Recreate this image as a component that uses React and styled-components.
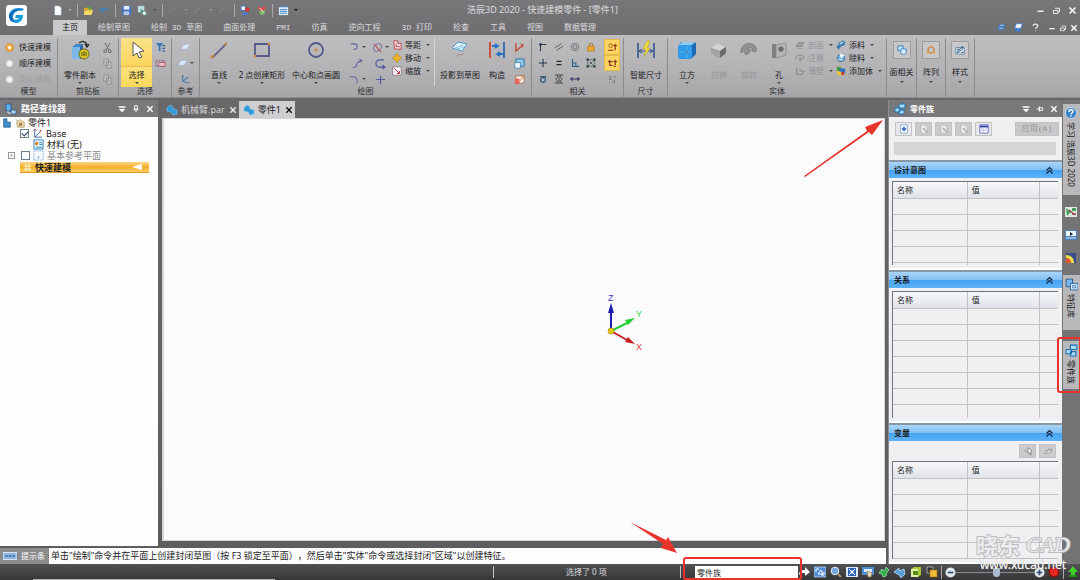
import React from 'react';
import styled, { createGlobalStyle, css } from 'styled-components';

const GlobalStyle = createGlobalStyle`
  * {
    box-sizing: border-box;
  }

  body {
    margin: 0;
    font-family: 'Noto Sans', 'Noto Sans CJK SC', sans-serif;
    font-size: 8px;
    line-height: 10px;
    color: #1c1c1e;
    background: #6b6b6d;
  }

  button, input, select {
    font: inherit;
    color: inherit;
    margin: 0;
    padding: 0;
    border: 0;
    background: none;
  }

  svg {
    display: block;
    flex: none;
  }
`;

/* ---------- icons ---------- */

const big = {
  copyPart: <>
    <path d="M2 7l4-3h7v12l-3 3H2z" fill="#3f86c8" /><path d="M2 7h8v12H2z" fill="#7db7e6" /><path d="M10 7l3-3v12l-3 3z" fill="#2a66a4" />
    <path d="M9 3c4-3 8-1 8 3m-2-2l2 3 2-3" fill="none" stroke="#333" strokeWidth="1.4" />
    <circle cx="14" cy="14" r="5" fill="#d5c72c" stroke="#766b12" /><path d="M12 16v-4m2 4v-5m2 5v-4" stroke="#5c5412" />
  </>,
  cursor: <path d="M6 2v14l4-3 2 5 3-1-3-5 5-1z" fill="#fff" stroke="#555" strokeWidth="1" />,
  line: <><path d="M4 17L17 4" stroke="#64648c" strokeWidth="1.8" /><path d="M2 18l3-3" stroke="#c8813a" strokeWidth="2" /><path d="M15 5l3-2" stroke="#c8813a" strokeWidth="2" /></>,
  rect: <><path d="M3 4h14v12H3z" fill="none" stroke="#56598c" strokeWidth="1.8" /><circle cx="3" cy="16" r="1.3" fill="#d08a3c" /><circle cx="17" cy="4" r="1.3" fill="#d08a3c" /></>,
  circle: <><circle cx="10" cy="10" r="7" fill="none" stroke="#56598c" strokeWidth="1.8" /><circle cx="10" cy="10" r="1.5" fill="#d08a3c" /></>,
  project: <><path d="M2 8l6-6 9 2-5 7z" fill="#e2f2fb" stroke="#4b9ac9" /><path d="M5 8l8-3M7 9l7-2" stroke="#7cc0e4" /><path d="M6 17c2-5 5 0 8-4" stroke="#b58a8a" fill="none" /></>,
  construct: <><path d="M3 2v16" stroke="#cc4a32" strokeWidth="1.8" /><path d="M17 2v16" stroke="#3369a8" strokeWidth="1.8" /><path d="M5 6h6m-3-2l3 2-3 2M16 14h-6m3-2l-3 2 3 2" stroke="#2774c4" strokeWidth="1.8" fill="none" /></>,
  smartDim: <><path d="M2 3v15M18 3v15" stroke="#31548a" strokeWidth="1.6" /><path d="M3 11h14M6 9l-3 2 3 2m8-4l3 2-3 2" stroke="#31548a" fill="none" /><path d="M11 1L7 9h3l-2 8 6-9h-3l3-7z" fill="#f4e23c" stroke="#b6a32a" strokeWidth=".6" /></>,
  box: <><path d="M4 2h13q2 0 2 2v10l-4 4H2V5z" fill="#1f68b4" /><rect x="1" y="5" width="14" height="14" rx="2" fill="#2f9ae8" /><path d="M2 5l3-3h13l-3 3z" fill="#8ccaf2" /><circle cx="10" cy="12" r="1.3" fill="#0e3c74" /><path d="M10 6v12M2 12h12" stroke="#6fbcf2" strokeWidth=".7" /></>,
  extrude: <><path d="M2 8l6-5 9 4v6l-7 5-8-5z" fill="#8c8c8e" /><path d="M2 8l6-5 9 4-6 4z" fill="#d4d4d6" /><path d="M2 8l9 4v6l-9-5z" fill="#a5a5a7" /><path d="M11 11l6-4v6l-6 5z" fill="#6b6b6d" /></>,
  revolve: <path d="M2 13C1 5 8 2 13 4c4 1 5 4 4 8l-4-1V8c-2-1-4-1-5 1h3v3L7 15l-2-4z" fill="#929294" stroke="#747476" strokeWidth=".7" />,
  hole: <><path d="M3 4h4v14H3z" fill="#7e7e80" /><path d="M7 5l10-2v12l-10 3z" fill="#b5b5b7" stroke="#858587" strokeWidth=".7" /><circle cx="12" cy="9" r="2.6" fill="#6c6c6e" /></>,
  faceRel: <><path d="M3 3h9v8H3z" fill="#bcdcf4" stroke="#3f83bd" strokeWidth="1.5" /><rect x="8" y="8" width="9" height="9" rx="2" fill="#d8ecfa" stroke="#3f83bd" strokeWidth="1.5" /></>,
  pattern: <><circle cx="10" cy="10" r="5" fill="none" stroke="#c8813a" strokeWidth="2" /><circle cx="10" cy="4" r="2" fill="#e0a050" /><circle cx="5" cy="14" r="2" fill="#e0a050" /><circle cx="15" cy="14" r="2" fill="#e0a050" /></>,
  style: <><path d="M3 6h14v11H3z" fill="#d8e5ee" stroke="#2f5f85" /><path d="M5 14l7-8 3-2-1 4-6 6zM5 9h4m3 5h4" stroke="#234b6b" strokeWidth="1.3" fill="none" /></>,
};

const small = {
  page: <path d="M3 1h5l2 2v8H3z" fill="#fff" stroke="#a9bfd4" strokeWidth=".6" />,
  open: <><path d="M1 3h4l1 1h4v6H1z" fill="#d6a42c" /><path d="M2 6h9l-2 5H1z" fill="#f4db6a" /><path d="M5 2l5 1-2 3z" fill="#57a843" /></>,
  undo: <path d="M3 6c1-4 6-3 6 1M1 4l2 3 3-2" fill="none" stroke="#3f83bd" strokeWidth="1.5" />,
  save: <><path d="M1 1h10v10H1z" fill="#4a72c4" /><path d="M3 1h6v4H3z" fill="#e6eefb" /><path d="M3 7h6v4H3z" fill="#b9c9e6" /></>,
  saveAll: <><path d="M1 1h7v7H1z" fill="#bcdde0" /><path d="M4 4l7 5-2 3-5-4z" fill="#4d9a70" /><circle cx="8" cy="9" r="2" fill="#e8f2f5" /></>,
  faded: <path d="M2 9c1-4 4-6 7-6" fill="none" stroke="#858587" />,
  part: <><path d="M1 1h5v5H1z" fill="#eef3fb" stroke="#3c66b8" /><path d="M5 6l2-4 4 2-2 4z" fill="#d2383a" /><path d="M3 8h5v3H3z" fill="#4a7ed0" /></>,
  part2: <><path d="M2 1l4 2 4-2v4l-4 2-3-2z" fill="#e04848" /><path d="M3 6l3 1 4-2-1 5-4 1z" fill="#78c063" /><path d="M4 3l4 5" stroke="#fff" /></>,
  list: <><path d="M1 2h10v9H1z" fill="#dff0fc" /><path d="M1 2h10M2 5h8M2 7h8M2 9h8" stroke="#3f83bd" /></>,
  cut: <path d="M3 1l5 8M9 1L4 9M2 10a1.5 1.5 0 103 0 1.5 1.5 0 10-3 0m5 0a1.5 1.5 0 103 0 1.5 1.5 0 10-3 0" fill="none" stroke="#77777a" strokeWidth="1.2" />,
  copy: <path d="M2 1h5v7H2zM5 4h5v7H5z" fill="#bcbcbe" stroke="#89898b" strokeWidth=".8" />,
  filter: <><path d="M1 1h8L6 5v5H4V5z" fill="#3878bd" /><path d="M8 4h3M8 7h3M8 10h3" stroke="#2f5f95" strokeWidth="1.3" /></>,
  selBox: <><path d="M1 3h9v6H1z" fill="none" stroke="#7d4a78" strokeDasharray="2 1" /><path d="M4 5h7v4H4z" fill="#e9c7cc" stroke="#b03c50" strokeWidth=".8" /></>,
  plane: <path d="M1 8l3-5 7-1-3 6z" fill="#dae7f5" stroke="#a1b6d0" strokeWidth=".7" />,
  axes: <path d="M3 1v7l7 2M3 8l6-5M2 4l2-2" fill="none" stroke="#4a7da8" strokeWidth="1.1" />,
  arc: <path d="M2 2h4a3 3 0 010 6H5" fill="none" stroke="#65689c" strokeWidth="1.2" />,
  trim: <><ellipse cx="6" cy="6" rx="5" ry="3.500" transform="rotate(-40 6 6)" fill="none" stroke="#7a6a98" /><path d="M2 2l8 9" stroke="#b5525e" strokeWidth="1.2" /></>,
  curve: <path d="M1 10c6 2 2-7 9-7M8 1l3 2-3 2" fill="none" stroke="#65689c" strokeWidth="1.2" />,
  slot: <path d="M10 2H5a4 4 0 000 8h6M8 8l3 2-3 2" fill="none" stroke="#5157a2" strokeWidth="1.3" />,
  fillet: <path d="M1 3h4c3 0 4 2 4 7" fill="none" stroke="#65689c" strokeWidth="1.2" />,
  cross: <path d="M6 2v9M1 6h10" fill="none" stroke="#5157a2" strokeWidth="1.2" />,
  offset: <><path d="M2 1h5v3h4v7H3z" fill="#f2dada" stroke="#b53544" /><path d="M5 4v4h5" fill="none" stroke="#b53544" /></>,
  move: <path d="M6 0l2 3v1h1l3 2-3 2H8v1l-2 3-2-3V8H3L0 6l3-2h1V3z" fill="#edb52c" stroke="#a66d12" strokeWidth=".5" />,
  scale: <><path d="M1 1h10v10H1z" fill="#fff" stroke="#8b6d80" /><path d="M3 3l6 6M6 9h3V6" stroke="#c43545" fill="none" strokeWidth="1.2" /></>,
  angle: <><path d="M2 1v9l8-7" fill="none" stroke="#c2442d" strokeWidth="1.4" /><path d="M7 2l3 1-1 3" fill="none" stroke="#c2442d" /></>,
  sheet: <><path d="M2 1h9v8H2z" fill="#8fc8ea" stroke="#2c6da0" /><path d="M1 5h6v6H1z" fill="#f4f8fb" stroke="#2c6da0" strokeWidth=".7" /></>,
  sheet2: <><path d="M2 2h9v8H2z" fill="#f8efe6" stroke="#a56a4a" /><path d="M1 5h5v6H1z" fill="#e5645a" /><path d="M8 1l2 2-4 5" stroke="#cf7d20" fill="none" /></>,
  connect: <path d="M3 11V3h7M2 2h2v2H2z" fill="none" stroke="#26364f" strokeWidth="1.2" />,
  parallel: <path d="M1 7l8-5M3 10l8-5" stroke="#5a5a60" strokeWidth="1.1" />,
  ring: <><circle cx="6" cy="6" r="4.5" fill="none" stroke="#6e6e78" /><circle cx="6" cy="6" r="2.3" fill="none" stroke="#6e6e78" /></>,
  lock: <><path d="M2 5h8v6H2z" fill="#eba62f" stroke="#a56c14" strokeWidth=".6" /><path d="M4 5V2h4v3" fill="none" stroke="#b5781c" /></>,
  plus: <path d="M6 1v10M1 6h10" stroke="#26364f" strokeWidth="1.3" />,
  equal: <path d="M3 4h6M3 8h6" stroke="#26262a" strokeWidth="1.6" />,
  perp: <path d="M3 1v9h8M3 6h4v4" fill="none" stroke="#2b6594" strokeWidth="1.3" />,
  rigid: <><path d="M2 2h8v8H2z" fill="none" stroke="#2f5a35" strokeDasharray="2 1" /><path d="M1 1h2v2H1zM9 1h2v2H9zM1 9h2v2H1zM9 9h2v2H9zM4 4l4 4m0-4L4 8" fill="#4a6a4a" stroke="#24324a" strokeWidth=".8" /></>,
  tangent: <><circle cx="6" cy="7" r="3" fill="none" stroke="#26506e" strokeWidth="1.3" /><path d="M2 3h8" stroke="#26506e" /></>,
  symmetric: <path d="M1 1h3v3L2 6l2 2v3H1M11 1H8v3l2 2-2 2v3h3M6 0v12" fill="none" stroke="#36363a" strokeWidth="1" />,
  horiz: <path d="M1 6h10M3 4L1 6l2 2m6-4l2 2-2 2" fill="none" stroke="#31315f" strokeWidth="1.3" />,
  relA: <><circle cx="4" cy="4" r="2" fill="none" stroke="#a5581c" /><path d="M1 9h6m2-7v7M7 4h4" stroke="#9c3424" strokeWidth="1.3" /></>,
  relB: <path d="M3 2v6h3M1 4h5m3-2v6M7 4h4M7 9h3" fill="none" stroke="#8c3424" strokeWidth="1.3" />,
  relC: <path d="M2 3h2v3H2m5-3h3M2 9h1m2 0h1m2-3v4" fill="none" stroke="#77777a" strokeWidth="1.2" />,
  grayA: <path d="M1 8l3-5h7L8 8zM3 10h6" fill="#9a9a9c" stroke="#858587" strokeWidth=".8" />,
  grayB: <path d="M1 8c0-7 7-7 10-3L8 8 6 5v6" fill="none" stroke="#858587" strokeWidth="1.2" />,
  grayC: <path d="M2 2v8h6l3-4H6V3" fill="none" stroke="#858587" strokeWidth="1.2" />,
  addMat: <><path d="M3 4l5-3 3 2-2 4-2-1-4 5-2-3 3-2z" fill="#3a86c4" stroke="#1d4c7c" strokeWidth=".6" /><path d="M4 4l4-2 1 1-4 2z" fill="#d4ecfa" /></>,
  cutMat: <><circle cx="6" cy="6" r="4.5" fill="#6caede" stroke="#245d90" strokeWidth=".7" /><path d="M6 6L5 1l5 2zM3 8h5" fill="#fff" stroke="#e6f2fa" /></>,
  addBody: <><path d="M1 1h5v5H1z" fill="#4a9e3c" /><path d="M4 3h7v6H4z" fill="#2d6fc0" /><path d="M1 6l5 1v4H2z" fill="#f0c630" /><circle cx="8" cy="9" r="2" fill="#d6412c" /></>,
  family: <path d="M5 1h6v4H5zM1 5h5v4H1zM5 7h5v4H5z" fill="#a9dcf8" stroke="#1f6eb2" strokeWidth="1" />,
  finder: <><path d="M1 1h5v7H1z" fill="#5fb1e8" stroke="#1b4f88" strokeWidth=".7" /><path d="M6 7h5v4H6z" fill="#a6d4f4" stroke="#1b4f88" strokeWidth=".7" /><path d="M3 8v2h3" stroke="#dce9f4" fill="none" /></>,
  docPart: <path d="M1 4l3-3 3 2v2l4 1v4l-4 1-2-3-4-1z" fill="#2f9ad8" stroke="#79c7ef" strokeWidth=".6" />,
  cube: <path d="M2 1h4v4h4v6H2z" fill="#3d8fd0" stroke="#1a4e82" strokeWidth=".8" />,
  house: <><path d="M2 5l4-3 5 3v6H3z" fill="#f6e4b8" stroke="#a67d3a" strokeWidth=".8" /><path d="M1 2l3 2M5 6h3v3H5z" stroke="#555" fill="#d18c2e" strokeWidth=".6" /></>,
  base: <><path d="M3 1v9h8M3 10l6-6" fill="none" stroke="#39669c" /><path d="M1 3l2-2 2 2m3 0l2-1-1 3" fill="none" stroke="#b83c46" strokeWidth=".8" /></>,
  material: <><path d="M1 1h10v10H1z" fill="#eaf5fb" stroke="#2e80b4" /><circle cx="4" cy="5" r="2" fill="#d8862e" /><path d="M7 4h3M7 6h3M3 9h7" stroke="#2e80b4" /></>,
  refPlane: <><path d="M1 1h10v10H1z" fill="#fafcff" stroke="#7fa9d4" strokeDasharray="2 1" /><path d="M5 7h2v2H5z" fill="#7fa9d4" /></>,
  hash: <path d="M4 1v10M8 1v10M1 4h10M1 8h10" stroke="#fff6d2" strokeWidth="1.3" />,
  tbNew: <><path d="M2 1h8v10H2z" fill="#fff" stroke="#5a7fb8" strokeWidth=".7" /><path d="M6 3l3 3-3 3-3-3z" fill="#3a70c8" /></>,
  tbGray: <><path d="M2 1h5l3 3v7H2z" fill="#e8e8ea" stroke="#aeaeb0" strokeWidth=".8" /><path d="M5 5l5 5" stroke="#98989a" strokeWidth="1.3" /></>,
  tbTable: <><path d="M1 1h10v10H1z" fill="#fff" stroke="#5a5fa8" /><path d="M1 3h10" stroke="#3c46b0" strokeWidth="2.4" /><path d="M2 6h8M2 8h8M5 5v6" stroke="#a8acd8" strokeWidth=".7" /></>,
  pointer: <><path d="M1 6h5" stroke="#a0a0a2" /><path d="M6 2v7l2-1 1 3 1-1-1-3 2-1z" fill="#fff" stroke="#555" strokeWidth=".7" /></>,
  pointer2: <path d="M1 9h4V5h5l-1 3-3 1M2 6l3-1M7 2v3M10 2v4" stroke="#929294" fill="#dcdcde" strokeWidth=".8" />,
  help: <><circle cx="6" cy="6" r="5.5" fill="#3a82c8" stroke="#c5def5" strokeWidth=".8" /><path d="M4 5c0-3 4-3 4-.5C8 6 6 6 6 7.500m0 1v1.300" fill="none" stroke="#fff" strokeWidth="1.4" /></>,
  sensor: <><path d="M0 1h12v10H0z" fill="#dce9e0" /><path d="M1 2l5 4-4 4zM7 2h4v3H7z" fill="#4aa05a" /><path d="M4 4l6 5M7 8h4" stroke="#9c4658" strokeWidth="1.5" /></>,
  player: <><path d="M0 1h12v10H0z" fill="#4a83c0" /><path d="M1 2h10v5H1z" fill="#eef5fc" /><path d="M5 3l3 2-3 2z" fill="#222" /><path d="M1 9h10" stroke="#dce9f8" /></>,
  rainbow: <><path d="M1 1h10v10H1z" fill="#37508c" /><path d="M1 3c5 0 8 3 8 8H1z" fill="#e9dc4a" /><path d="M1 6c3 0 5 2 5 5H1z" fill="#e05230" /></>,
  features: <><path d="M1 1h6v7H1z" fill="#78b8ec" stroke="#244f86" strokeWidth=".8" /><path d="M5 5h7v6H5z" fill="#c9e4f9" stroke="#2a66a4" strokeWidth=".8" /><path d="M7 7h3v2H7z" fill="none" stroke="#2a66a4" strokeWidth=".6" /></>,
  prompt: <><path d="M0 3h12v6H0z" fill="#8db9e2" stroke="#d7e6f4" strokeWidth=".8" /><path d="M2 6h2m1 0h2m1 0h2" stroke="#2f5f95" strokeWidth="1.3" /></>,
  stack: <><path d="M3 2h8l-1 3H2zM2 6h8l-1 3H1z" fill="#3b82d8" /><path d="M4 3h5M3 7h5" stroke="#fff" strokeWidth=".7" /></>,
  stack2: <><path d="M3 1h8L9 7H1z" fill="#fff" stroke="#3b82d8" /><path d="M1 8h8v3H1z" fill="#3b82d8" /></>,
  go: <path d="M1 9c0-4 2-5 6-5V1l5 5-5 4V7C4 7 3 7 1 9z" fill="#fff" />,
  fit: <><path d="M0 1h12v10H0z" fill="#4d8ed4" stroke="#cfe2f6" strokeWidth=".7" /><path d="M2 3h3M2 3v3m8 3H7m3 0V6M4 8l3-4 2 4z" stroke="#fff" fill="none" /></>,
  zoom: <><circle cx="5" cy="5" r="3.800" fill="#6fa6dc" stroke="#e4effa" /><path d="M8 8l3 3" stroke="#ba895a" strokeWidth="2" /></>,
  zoomAll: <><path d="M0 1h12v10H0z" fill="#dbeafa" /><path d="M2 2h8v8H2z" fill="#2e62b0" /><path d="M3 3l6 6m0-6L3 9" stroke="#fff" /><circle cx="6" cy="6" r="1.500" fill="#fff" /></>,
  pan: <><path d="M0 1h12v8H0z" fill="#4d8ed4" /><path d="M2 3h8v3H2z" fill="#ddecfa" /><path d="M5 5l5 2-1 4H6z" fill="#f0dcc0" stroke="#8b6d4a" strokeWidth=".6" /></>,
  rotate: <path d="M1 7l3-4 1 2c2-1 3-2 3-4l3 3-2 2-1 4-3 1-1-3z" fill="#2faf4a" stroke="#b4efbe" strokeWidth=".7" />,
  orient: <path d="M0 6l5-4v3l5-2 1 5-4 4-2-3z" fill="#579edd" stroke="#d0e6f8" strokeWidth=".7" />,
  views: <><path d="M1 3l3-2h7v8l-3 2H1z" fill="#a7c83a" /><path d="M1 3h7v8H1z" fill="#e2f2a4" /><path d="M3 5h5v4H3z" fill="#588a1d" /></>,
  colors: <><path d="M1 1h6v6H1z" fill="#333" stroke="#ccc" strokeWidth=".7" /><path d="M4 4h7v7H4z" fill="#f0bb35" stroke="#a06c14" strokeWidth=".6" /></>,
  minus: <><circle cx="6" cy="6" r="5.500" fill="#dfe6ee" /><path d="M3 6h6" stroke="#2f4770" strokeWidth="1.8" /></>,
  plusRound: <><circle cx="6" cy="6" r="5.500" fill="#dfe6ee" /><path d="M3 6h6M6 3v6" stroke="#2f4770" strokeWidth="1.8" /></>,
  record: <><circle cx="6" cy="6" r="5.500" fill="#8c1310" /><circle cx="6" cy="6" r="4" fill="#e52820" /></>,
  upload: <><path d="M6 0l5 6H8v3H4V6H1z" fill="#45cf2c" /><path d="M2 9h8v2H2z" fill="#24921a" /></>,
  min: <path d="M2 7h8" stroke="#eee" strokeWidth="2" />,
  restore: <path d="M4 3h6v5H8M2 6h6v4H2z" fill="none" stroke="#eee" strokeWidth="1.300" />,
  close: <path d="M2 2l8 8M10 2l-8 8" stroke="currentColor" strokeWidth="2" />,
  question: <path d="M3 4c0-4 6-3 6 0 0 2-3 2-3 4m0 2v1" fill="none" stroke="#eee" strokeWidth="1.600" />,
  menu: <path d="M1 2h10v2H1zM1 6h10l-5 5z" fill="#fff" />,
  pin: <path d="M4 1h4v5H4zM2 7h8M6 7v4" fill="none" stroke="#fff" strokeWidth="1.400" />,
  pinSide: <path d="M5 4h5v4H5zM5 2v8M1 6h4" fill="none" stroke="#fff" strokeWidth="1.400" />,
  collapse: <path d="M2 6l4-4 4 4M2 10l4-4 4 4" fill="none" stroke="#16243c" strokeWidth="1.600" />,
};

const Icon = ({ name, size = 10 }) => (
  <svg width={size} height={size} viewBox={big[name] ? '0 0 20 20' : '0 0 12 12'} aria-hidden="true">
    {big[name] || small[name]}
  </svg>
);

/* ---------- shared parts ---------- */

const Page = styled.div`
  min-height: 100vh;
  display: flex;
  flex-direction: column;
`;

const Caret = styled.i`
  flex: none;
  width: 0;
  height: 0;
  border: 2px solid transparent;
  border-top-color: ${(p) => p.$color || '#4a4a4c'};
  border-bottom: 0;
`;

const Row = styled.div`
  display: flex;
  align-items: center;
  gap: ${(p) => p.$gap || 0}px;
`;

const IconButton = styled.button`
  display: flex;
  align-items: center;
  justify-content: center;
  gap: 2px;
  min-width: 10px;
  color: ${(p) => p.$color || '#fff'};
`;

/* ---------- header ---------- */

const Header = styled.header`
  position: relative;
  background: linear-gradient(#777779, #6e6e70);
  color: #dcdcde;
`;

const Logo = styled.svg`
  position: absolute;
  left: 6px;
  top: 5px;
`;

const TitleRow = styled.div`
  display: grid;
  grid-template-columns: 1fr auto 1fr;
  align-items: center;
  height: 20px;
  padding: 0 3px 0 8px;
`;

const QuickBar = styled.div`
  display: flex;
  align-items: center;
  gap: 5px;
  padding-left: 44px;
`;

const QuickSep = styled.span`
  width: 1px;
  height: 13px;
  background: #a9a9ab;
`;

const Title = styled.h1`
  margin: 0;
  font-size: 9px;
  font-weight: 400;
`;

const WindowButtons = styled.div`
  display: flex;
  justify-content: flex-end;
  gap: ${(p) => p.$gap}px;
`;

const TabRow = styled.div`
  display: flex;
  align-items: stretch;
  justify-content: space-between;
  height: 15px;
  padding: 0 1px 0 53px;
`;

const Tabs = styled.nav`
  display: flex;
  font-family: 'Liberation Mono', 'Noto Sans CJK SC', monospace;
`;

const Tab = styled.button`
  padding: 0 10px 0 11px;
  white-space: nowrap;
  ${(p) => p.$active && css`
    padding: 0 9px;
    background: #c9c9cb;
    color: #111;
  `}
`;

/* ---------- ribbon ---------- */

const Ribbon = styled.section`
  display: flex;
  height: 63px;
  padding: 3px 0 0;
  background: linear-gradient(#bebec0, #b2b2b4 60%, #a6a6a8);
  border-bottom: 1px solid #8f8f91;
  overflow: hidden;
`;

const GroupBox = styled.div`
  flex: none;
  display: flex;
  flex-direction: column;
  width: ${(p) => p.$width}px;
  border-right: 1px solid #8b8b8d;
  text-align: center;
`;

const GroupBody = styled.div`
  flex: 1;
  display: flex;
  padding: 0 2px;
  min-height: 0;
`;

const GroupLabel = styled.div`
  height: 11px;
  line-height: 9px;
  color: #303032;
`;

const Tool = styled.button`
  display: flex;
  flex-direction: column;
  align-items: center;
  flex: none;
  width: ${(p) => p.$width}px;
  height: 49px;
  padding-top: 2px;
  white-space: nowrap;
  color: ${(p) => (p.disabled ? '#949496' : '#1c1c1e')};

  span {
    margin: 10px 0 2px;
  }
  ${(p) => p.$selected && css`
    background: linear-gradient(#fbe28a, #fbd65e 56%, #e3a92f 57%, #fce27e 60%, #fbd85c);
  `}
`;

const SmallTool = styled(Tool)`
  padding-top: 3px;

  span {
    margin: 8px 0 4px;
  }
`;

const IconFrame = styled.div`
  padding: 2px;
  background: #c8c8ca;
  border: 1px solid #9d9d9f;
`;

const ToolGrid = styled.div`
  display: grid;
  grid-template-columns: repeat(${(p) => p.$cols}, ${(p) => p.$cell || 16}px);
  grid-auto-rows: 16px;
  padding-top: 1px;
  margin-left: ${(p) => p.$left || 0}px;
`;

const GridTool = styled(IconButton)`
  background: ${(p) => (p.$selected ? '#fbd65e' : 'none')};
  outline: ${(p) => (p.$selected ? '1px solid #e3b94a' : 'none')};
  outline-offset: -1px;
`;

const ToolList = styled.div`
  display: grid;
  grid-auto-rows: 13px;
  margin-left: ${(p) => p.$left || 0}px;
`;

const ListTool = styled.button`
  display: flex;
  align-items: center;
  gap: 3px;
  white-space: nowrap;
  color: ${(p) => (p.disabled ? '#949496' : '#1c1c1e')};

  i {
    margin-left: 2px;
  }
`;

const InnerSep = styled.span`
  width: 1px;
  margin: 0 2px 0 4px;
  background: #d4d4d6;
`;

const Modes = styled.div`
  display: grid;
  grid-auto-rows: 16px;
  padding: 1px 0 0 3px;
`;

const Mode = styled.label`
  display: flex;
  align-items: center;
  gap: 5px;
  white-space: nowrap;
  color: ${(p) => (p.$off ? '#a0a0a2' : '#1c1c1e')};

  input {
    appearance: none;
    width: 9px;
    height: 9px;
    border: 1px solid #b4b4b6;
    border-radius: 50%;
    background: radial-gradient(#fff, #d6d6d8);
  }
  input:checked {
    border-color: #d9892c;
    background: radial-gradient(#fff 20%, #f2a33a 45%, #f6d9a4);
  }
`;

/* ---------- workspace ---------- */

const Workspace = styled.main`
  flex: 1;
  display: grid;
  grid-template-columns: 158px minmax(0, 1fr) 174px 18px;
  grid-template-rows: 1fr 16px;
  padding-top: 2px;
  background: linear-gradient(#68686a, #5d5d5f);
`;

const Finder = styled.aside`
  display: flex;
  flex-direction: column;
  margin-bottom: 2px;
  background: #fefefe;
`;

const PanelHeader = styled.div`
  display: flex;
  align-items: center;
  gap: 4px;
  height: 17px;
  padding: 0 3px 0 5px;
  background: #79797b;
  color: #fff;

  h2 {
    flex: 1;
    margin: 0;
    font-size: ${(p) => p.$size || 8}px;
    font-weight: 700;
  }
`;

const Tree = styled.ul`
  margin: 0;
  padding: 0;
  list-style: none;
  font-size: 9px;
  line-height: 11px;
`;

const Node = styled.li`
  display: flex;
  align-items: center;
  gap: 3px;
  height: 11px;
  padding-left: ${(p) => p.$indent}px;
  color: ${(p) => (p.$dim ? '#8a8a8c' : '#222')};

  ${(p) => p.$selected && css`
    margin: 1px 9px 0 20px;
    padding-right: 7px;
    background: linear-gradient(#fbd98a, #f2ae28 50%, #fbd166);
    border-bottom: 1px solid #e0982a;
    font-weight: 700;

    span {
      flex: 1;
    }
  `}

  label {
    display: flex;
    align-items: center;
    gap: 3px;
  }
`;

const Check = styled.input`
  appearance: none;
  display: grid;
  place-items: center;
  width: 9px;
  height: 9px;
  border: 1px solid #6d7f95;
  background: #fff;

  &:checked::before {
    content: '';
    width: 5px;
    height: 3px;
    margin-bottom: 1px;
    border: solid #22406e;
    border-width: 0 0 1px 1px;
    transform: rotate(-45deg);
  }
`;

const Expander = styled.button`
  width: 7px;
  height: 7px;
  margin-right: 3px;
  border: 1px solid #999;
  font-size: 7px;
  line-height: 4px;
`;

const Marker = styled.i`
  border: 4px solid transparent;
  border-width: 3px 10px 3px 0;
  border-right-color: #fff;
`;

const Center = styled.div`
  display: flex;
  flex-direction: column;
  padding: 1px 3px 7px 4px;
`;

const DocTabs = styled.div`
  display: flex;
  height: 17px;
`;

const DocTab = styled.div`
  display: flex;
  align-items: center;
  gap: 3px;
  padding: 0 1px 0 4px;
  font-size: 9px;
  background: ${(p) => (p.$active ? '#cfcfd1' : 'none')};
  color: ${(p) => (p.$active ? '#1c1c1e' : '#d2d2d4')};
  min-width: ${(p) => (p.$active ? 54 : 76)}px;

  span {
    flex: 1;
    white-space: nowrap;
  }
`;

const Canvas = styled.div`
  position: relative;
  flex: 1;
  background: #fbfafc;
  border: solid #d6d6d8;
  border-width: 1px 1px 1px 2px;
`;

const Triad = styled.svg`
  position: absolute;
  left: 61%;
  top: 41%;
  font-family: 'Liberation Sans', sans-serif;
  font-size: 9px;
`;

const CanvasArrow = styled.svg`
  position: absolute;
  right: 0;
  top: 0;
`;

const PromptBar = styled.div`
  grid-column: 1 / 3;
  grid-row: 2;
  display: flex;
  align-items: center;
  margin-right: 2px;
  background: #fdfdfd;
  font-size: 9px;
  white-space: nowrap;
  text-spacing-trim: space-all;
  overflow: hidden;
`;

const PromptLabel = styled.div`
  display: flex;
  align-items: center;
  gap: 4px;
  height: 100%;
  width: 49px;
  padding-left: 3px;
  margin-right: 2px;
  background: #8b8b8d;
  color: #fff;
  font-size: 8px;
`;

/* ---------- right panel ---------- */

const FamilyPanel = styled.aside`
  grid-column: 3;
  grid-row: 1 / 3;
  position: relative;
  display: flex;
  flex-direction: column;
  border-left: 1px solid #8d8d8f;
  background: #f0eff1;
`;

const PanelTools = styled.div`
  display: flex;
  gap: 3px;
  padding: 5px 3px 0 6px;
`;

const PanelButton = styled.button`
  display: flex;
  align-items: center;
  justify-content: center;
  width: 17px;
  height: 14px;
  border: 1px solid #c3c3c5;
  background: ${(p) => (p.disabled ? '#cbcbcd' : '#e6e7ea')};
`;

const Apply = styled(PanelButton)`
  width: 44px;
  margin-left: auto;
  color: #949496;
  background: #c8c8ca;
  font-family: 'Liberation Mono', 'Noto Sans CJK SC', monospace;
`;

const Combo = styled.select`
  appearance: none;
  height: 13px;
  margin: 6px 6px 5px 5px;
  background: #c9c9cb;
`;

const Section = styled.section`
  display: flex;
  flex-direction: column;
  flex: ${(p) => (p.$height ? `0 0 ${p.$height}px` : '1')};
  border-bottom: 2px solid #fff;
`;

const SectionHeader = styled.div`
  display: flex;
  align-items: center;
  justify-content: space-between;
  height: 18px;
  padding: 0 8px 0 5px;
  border-top: 2px solid #8a98a6;
  background: linear-gradient(#a8d4f8, #83c1f6 48%, #45a4f2 50%, #5db2f8);

  h3 {
    margin: 0;
    font-size: 8px;
  }
`;

const VariableTools = styled.div`
  display: flex;
  justify-content: flex-end;
  gap: 3px;
  padding: 3px 6px 0 0;
`;

const TableWrap = styled.div`
  flex: 1 1 0;
  margin: 3px 4px 3px 3px;
  overflow: hidden;
  border: solid #6e747c;
  border-width: 1px 0 0 1px;
`;

const Table = styled.table`
  width: 100%;
  table-layout: fixed;
  border-collapse: collapse;

  th, td {
    height: 16px;
    padding: 0 4px;
    border: solid #c2c1c4;
    border-width: 0 1px 1px 0;
    text-align: left;
    font-weight: 400;
  }
  th {
    background: linear-gradient(#f6f7f9, #dfe3e9);
  }
  th:last-child, td:last-child {
    border-right: 0;
  }
`;

const Watermark = styled.div`
  position: absolute;
  right: -8px;
  bottom: -8px;
  display: flex;
  flex-direction: column;
  align-items: center;
  font-size: 12px;
  line-height: 14px;
  color: #fff;
  text-shadow: 0 0 1px #888;
  pointer-events: none;
  z-index: 1;

  strong {
    display: flex;
    gap: 6px;
    font-size: 22px;
    font-weight: 700;
    line-height: 26px;
    color: #ececee;
    -webkit-text-stroke: 2px #bcbcbe;
    paint-order: stroke fill;
    text-shadow: none;
  }
  em {
    font-family: 'Liberation Serif', serif;
    font-weight: 400;
  }
`;

/* ---------- side strip ---------- */

const Strip = styled.nav`
  grid-column: 4;
  grid-row: 1 / 3;
  display: flex;
  flex-direction: column;
  align-items: center;
  gap: 11px;
  padding-top: 4px;
  background: #747476;
`;

const SideTab = styled.button`
  position: relative;
  display: flex;
  flex-direction: column;
  align-items: center;
  gap: 3px;
  width: 17px;
  min-height: ${(p) => p.$height}px;
  padding-top: 3px;
  background: #b9b9bb;

  span {
    writing-mode: vertical-rl;
    text-orientation: sideways;
    white-space: nowrap;
  }
`;

const Callout = styled.div`
  position: absolute;
  inset: ${(p) => p.$inset};
  border: 2px solid #e8332c;
  border-radius: 3px;
  pointer-events: none;
`;

/* ---------- status bar ---------- */

const StatusBar = styled.footer`
  position: relative;
  display: grid;
  grid-template-columns: 494fr 187fr auto;
  align-items: center;
  height: 16px;
  background: linear-gradient(#525254, #363638);
  color: #dadadc;

  &::after {
    content: '';
    position: absolute;
    left: 33px;
    bottom: 0;
    width: 242px;
    height: 1px;
    background: #b4b4b6;
  }
`;

const StatusCell = styled.div`
  height: 12px;
  border-right: 1px solid #c5c5c7;
  padding: 1px 0 0 72px;
`;

const StatusTools = styled.div`
  display: flex;
  align-items: center;
  gap: 3px;
  padding: 0 1px 0 14px;
`;

const Find = styled.div`
  position: relative;

  input {
    display: block;
    width: 103px;
    height: 12px;
    padding: 0 2px;
    background: #fff;
    color: #1c1c1e;
  }
`;

const FindArrow = styled.svg`
  position: absolute;
  left: -66px;
  bottom: 24px;
`;

const Zoom = styled.input`
  appearance: none;
  width: 78px;
  height: 12px;
  background: linear-gradient(#8b8b8d, #8b8b8d) center / 100% 1px no-repeat;

  &::-webkit-slider-thumb {
    appearance: none;
    width: 7px;
    height: 9px;
    border-radius: 1px 1px 4px 4px;
    background: #a9bccf;
  }
`;

/* ---------- data ---------- */

const menus = ['主页', '绘制草图', '绘制 3D 草图', '曲面处理', 'PMI', '仿真', '逆向工程', '3D 打印', '检查', '工具', '视图', '数据管理'];
const relations = ['connect', 'parallel', 'ring', 'lock', 'plus', 'equal', 'perp', 'rigid', 'tangent', 'symmetric', 'horiz'];
const viewTools = ['go', 'fit', 'zoom', 'zoomAll', 'pan', 'rotate', 'orient', 'views', 'colors'];

const Group = ({ label, width, children }) => (
  <GroupBox $width={width}>
    <GroupBody>{children}</GroupBody>
    {label && <GroupLabel>{label}</GroupLabel>}
  </GroupBox>
);

const BigTool = ({ icon, label, width, caret, ...rest }) => (
  <Tool $width={width} {...rest}>
    <Icon name={icon} size={20} />
    <span>{label}</span>
    {caret && <Caret />}
  </Tool>
);

const FramedTool = ({ icon, label, width }) => (
  <Group width={width}>
    <SmallTool $width={width - 5}>
      <IconFrame><Icon name={icon} size={12} /></IconFrame>
      <span>{label}</span>
      <Caret />
    </SmallTool>
  </Group>
);

const MiniTool = ({ icon, caret, selected, size = 11 }) => (
  <GridTool aria-label={icon} $selected={selected}>
    <Icon name={icon} size={size} />
    {caret && <Caret />}
  </GridTool>
);

const ListItem = ({ icon, label, caret = true, disabled }) => (
  <ListTool disabled={disabled}>
    <Icon name={icon} size={10} />
    {label}
    {caret && <Caret />}
  </ListTool>
);

const Quick = ({ icon }) => <IconButton aria-label={icon}><Icon name={icon} size={11} /></IconButton>;

const PropertyTable = ({ rows }) => (
  <TableWrap>
    <Table>
      <colgroup>
        <col style={{ width: '45%' }} />
        <col style={{ width: '44%' }} />
        <col />
      </colgroup>
      <thead>
        <tr><th>名称</th><th>值</th><th /></tr>
      </thead>
      <tbody>
        {Array.from({ length: rows }, (_, i) => (
          <tr key={i}><td /><td /><td /></tr>
        ))}
      </tbody>
    </Table>
  </TableWrap>
);

const PropertySection = ({ title, height, rows, children }) => (
  <Section $height={height}>
    <SectionHeader>
      <h3>{title}</h3>
      <IconButton aria-label={`折叠${title}`}><Icon name="collapse" size={9} /></IconButton>
    </SectionHeader>
    {children}
    <PropertyTable rows={rows} />
  </Section>
);

function AppHeader() {
  return (
    <Header>
      <Logo width="21" height="21" viewBox="0 0 21 21">
        <rect width="21" height="21" rx="3" fill="#f8fcff" />
        <path d="M18 4C10 1 3 5 3 11c0 5 4 7 8 7 4-1 6-4 6-8h-7l-1 3h4c-1 2-6 3-6-1 0-4 4-7 9-6z" fill="#179bd8" />
        <path d="M3 11c1-5 6-8 15-7-7 0-11 3-12 7 0 3 1 5 3 6-4 0-6-3-6-6z" fill="#1564b4" />
      </Logo>
      <TitleRow>
        <QuickBar>
          <Quick icon="page" />
          <Caret $color="#a8a8aa" />
          <QuickSep />
          <Quick icon="open" />
          <Quick icon="undo" />
          <QuickSep />
          <Quick icon="save" />
          <Quick icon="saveAll" />
          <Caret $color="#58585a" />
          <QuickSep />
          <Quick icon="faded" />
          <Caret $color="#8f8f91" />
          <Quick icon="faded" />
          <Caret $color="#8f8f91" />
          <Quick icon="faded" />
          <QuickSep />
          <Quick icon="part" />
          <Quick icon="part2" />
          <QuickSep />
          <Quick icon="list" />
          <Caret $color="#111" />
        </QuickBar>
        <Title>浩辰3D 2020 - 快速建模零件 - [零件1]</Title>
        <WindowButtons $gap={6}>
          {['min', 'restore', 'close'].map((name) => (
            <IconButton key={name} aria-label={name}><Icon name={name} size={9} /></IconButton>
          ))}
        </WindowButtons>
      </TitleRow>
      <TabRow>
        <Tabs>
          {menus.map((name, i) => <Tab key={name} $active={i === 0}>{name}</Tab>)}
        </Tabs>
        <Row $gap={7}>
          {['stack', 'stack2', 'question'].map((name) => (
            <IconButton key={name} aria-label={name}><Icon name={name} size={9} /></IconButton>
          ))}
          <WindowButtons $gap={1}>
            {['min', 'restore', 'close'].map((name) => (
              <IconButton key={name} aria-label={`文档 ${name}`}><Icon name={name} size={8} /></IconButton>
            ))}
          </WindowButtons>
        </Row>
      </TabRow>
    </Header>
  );
}

function HomeRibbon() {
  return (
    <Ribbon>
      <Group label="模型" width={58}>
        <Modes>
          <Mode><input type="radio" name="mode" defaultChecked />快速建模</Mode>
          <Mode><input type="radio" name="mode" />顺序建模</Mode>
          <Mode $off><input type="radio" name="mode" disabled />简化建模</Mode>
        </Modes>
      </Group>
      <Group label="剪贴板" width={61}>
        <BigTool icon="copyPart" label="零件副本" width={40} caret />
        <ToolGrid $cols={1} $cell={14}>
          <MiniTool icon="cut" />
          <MiniTool icon="copy" />
          <MiniTool icon="copy" />
        </ToolGrid>
      </Group>
      <Group label="选择" width={53}>
        <BigTool icon="cursor" label="选择" width={31} caret $selected />
        <ToolGrid $cols={1}>
          <MiniTool icon="filter" />
          <MiniTool icon="selBox" />
        </ToolGrid>
      </Group>
      <Group label="参考" width={28}>
        <ToolGrid $cols={1} $cell={23}>
          <MiniTool icon="plane" />
          <MiniTool icon="plane" caret />
          <MiniTool icon="axes" />
        </ToolGrid>
      </Group>
      <Group label="绘图" width={332}>
        <BigTool icon="line" label="直线" width={34} caret />
        <BigTool icon="rect" label="2 点创建矩形" width={52} caret />
        <BigTool icon="circle" label="中心和点画圆" width={56} caret />
        <ToolGrid $cols={2} $cell={23} $left={2}>
          <MiniTool icon="arc" caret />
          <MiniTool icon="trim" caret />
          <MiniTool icon="curve" />
          <MiniTool icon="slot" />
          <MiniTool icon="fillet" caret />
          <MiniTool icon="cross" />
        </ToolGrid>
        <ToolList>
          <ListItem icon="offset" label="等距" />
          <ListItem icon="move" label="移动" />
          <ListItem icon="scale" label="缩放" />
        </ToolList>
        <InnerSep />
        <BigTool icon="project" label="投影到草图" width={46} />
        <BigTool icon="construct" label="构造" width={28} />
        <ToolGrid $cols={1}>
          <MiniTool icon="angle" />
          <MiniTool icon="sheet" />
          <MiniTool icon="sheet2" />
        </ToolGrid>
      </Group>
      <Group label="相关" width={92}>
        <ToolGrid $cols={4} $left={1}>
          {relations.map((name) => <MiniTool key={name} icon={name} size={10} />)}
        </ToolGrid>
        <ToolGrid $cols={1} $left={5}>
          <MiniTool icon="relA" selected />
          <MiniTool icon="relB" selected />
          <MiniTool icon="relC" />
        </ToolGrid>
      </Group>
      <Group label="尺寸" width={44}>
        <BigTool icon="smartDim" label="智能尺寸" width={40} />
      </Group>
      <Group label="实体" width={219}>
        <BigTool icon="box" label="立方" width={34} caret />
        <BigTool icon="extrude" label="拉伸" width={30} disabled />
        <BigTool icon="revolve" label="旋转" width={30} disabled />
        <BigTool icon="hole" label="孔" width={30} caret />
        <ToolList $left={1}>
          <ListItem icon="grayA" label="剖面" disabled />
          <ListItem icon="grayB" label="注模" caret={false} disabled />
          <ListItem icon="grayC" label="薄壁" disabled />
        </ToolList>
        <ToolList $left={3}>
          <ListItem icon="addMat" label="添料" />
          <ListItem icon="cutMat" label="除料" />
          <ListItem icon="addBody" label="添加体" />
        </ToolList>
      </Group>
      <FramedTool icon="faceRel" label="面相关" width={30} />
      <FramedTool icon="pattern" label="阵列" width={29} />
      <FramedTool icon="style" label="样式" width={29} />
    </Ribbon>
  );
}

function PathFinder() {
  return (
    <Finder>
      <PanelHeader $size={9}>
        <Icon name="finder" size={12} />
        <h2>路径查找器</h2>
        <IconButton aria-label="选项"><Icon name="menu" size={8} /></IconButton>
        <IconButton aria-label="固定"><Icon name="pin" size={8} /></IconButton>
        <IconButton aria-label="关闭"><Icon name="close" size={8} /></IconButton>
      </PanelHeader>
      <Tree>
        <Node $indent={2}><Icon name="cube" /><Icon name="house" />零件1</Node>
        <Node $indent={20}>
          <label><Check type="checkbox" defaultChecked /><Icon name="base" size={11} />Base</label>
        </Node>
        <Node $indent={33}><Icon name="material" size={11} />材料 (无)</Node>
        <Node $indent={8} $dim>
          <Expander aria-label="展开">+</Expander>
          <label><Check type="checkbox" /><Icon name="refPlane" size={11} />基本参考平面</label>
        </Node>
        <Node $indent={3} $selected><Icon name="hash" size={9} /><span>快速建模</span><Marker /></Node>
      </Tree>
    </Finder>
  );
}

function Viewport() {
  return (
    <Center>
      <DocTabs>
        <DocTab>
          <Icon name="docPart" size={12} />
          <span>机械臂.par</span>
          <IconButton aria-label="关闭 机械臂.par" $color="#ececee"><Icon name="close" size={8} /></IconButton>
        </DocTab>
        <DocTab $active>
          <Icon name="docPart" size={12} />
          <span>零件1</span>
          <IconButton aria-label="关闭 零件1" $color="#111"><Icon name="close" size={8} /></IconButton>
        </DocTab>
      </DocTabs>
      <Canvas>
        <Triad width="46" height="64" viewBox="0 0 46 64">
          <path d="M8 39V19" stroke="#1b1ba8" strokeWidth="2" />
          <path d="M8 11l3 10H5z" fill="#1b1ba8" />
          <path d="M8 39l16-8" stroke="#20cf36" strokeWidth="2" />
          <path d="M32 26l-7 7-3-5z" fill="#20cf36" />
          <path d="M8 39l16 9" stroke="#c81e1e" strokeWidth="2" />
          <path d="M32 52l-10-2 3-5z" fill="#c81e1e" />
          <circle cx="8" cy="39" r="3" fill="#e8c80c" stroke="#8c7a08" strokeWidth=".5" />
          <text x="5" y="9" fill="#3a3ac4">Z</text>
          <text x="33" y="25" fill="#35d64a">Y</text>
          <text x="33" y="58" fill="#d43838">X</text>
        </Triad>
        <CanvasArrow width="80" height="60" viewBox="0 0 80 60">
          <path d="M0 57L63 12l-2-4 18-7-11 15-3-3L1 58z" fill="#e8352c" />
        </CanvasArrow>
      </Canvas>
    </Center>
  );
}

function PartFamily() {
  return (
    <FamilyPanel>
      <PanelHeader>
        <Icon name="family" size={12} />
        <h2>零件族</h2>
        <IconButton aria-label="选项"><Icon name="menu" size={8} /></IconButton>
        <IconButton aria-label="自动隐藏"><Icon name="pinSide" size={8} /></IconButton>
        <IconButton aria-label="关闭"><Icon name="close" size={8} /></IconButton>
      </PanelHeader>
      <PanelTools>
        <PanelButton aria-label="新建成员"><Icon name="tbNew" /></PanelButton>
        <PanelButton aria-label="复制成员" disabled><Icon name="tbGray" /></PanelButton>
        <PanelButton aria-label="重命名成员" disabled><Icon name="tbGray" /></PanelButton>
        <PanelButton aria-label="删除成员" disabled><Icon name="tbGray" /></PanelButton>
        <PanelButton aria-label="编辑表格"><Icon name="tbTable" /></PanelButton>
        <Apply disabled>应用(A)</Apply>
      </PanelTools>
      <Combo aria-label="成员" disabled />
      <PropertySection title="设计意图" height={110} rows={5} />
      <PropertySection title="关系" height={153} rows={7} />
      <PropertySection title="变量" rows={5}>
        <VariableTools>
          <PanelButton aria-label="选择变量" disabled><Icon name="pointer" /></PanelButton>
          <PanelButton aria-label="移除变量" disabled><Icon name="pointer2" /></PanelButton>
        </VariableTools>
      </PropertySection>
      <Watermark>
        <strong>晓东 <em>CAD</em></strong>
        www.xdcad.net
      </Watermark>
    </FamilyPanel>
  );
}

function SideStrip() {
  return (
    <Strip>
      <SideTab $height={91}><Icon name="help" size={12} /><span>学习 浩辰3D 2020</span></SideTab>
      {['sensor', 'player', 'rainbow'].map((name) => (
        <IconButton key={name} aria-label={name}><Icon name={name} size={12} /></IconButton>
      ))}
      <SideTab $height={55}><Icon name="features" size={13} /><span>特征库</span></SideTab>
      <SideTab $height={48}>
        <Icon name="family" size={13} />
        <span>零件族</span>
        <Callout $inset="-4px -1px -4px -6px" />
      </SideTab>
    </Strip>
  );
}

function Status() {
  return (
    <StatusBar>
      <StatusCell />
      <StatusCell>选择了 0 项</StatusCell>
      <StatusTools>
        <Row>
          <Find>
            <input type="text" aria-label="命令查找器" defaultValue="零件族" />
            <Callout $inset="-9px -4px -2px -12px" />
            <FindArrow width="50" height="32" viewBox="0 0 50 32">
              <path d="M1 0l36 18 2-3 9 16-16-5 2-4z" fill="#e8352c" />
            </FindArrow>
          </Find>
          <Row $gap={4}>
            {viewTools.map((name) => (
              <IconButton key={name} aria-label={name}><Icon name={name} size={12} /></IconButton>
            ))}
          </Row>
        </Row>
        <QuickSep />
        <Row>
          <IconButton aria-label="缩小"><Icon name="minus" size={11} /></IconButton>
          <Zoom type="range" aria-label="缩放" defaultValue="52" />
          <IconButton aria-label="放大"><Icon name="plusRound" size={11} /></IconButton>
        </Row>
        <IconButton aria-label="录制"><Icon name="record" size={12} /></IconButton>
        <QuickSep />
        <IconButton aria-label="上传"><Icon name="upload" size={12} /></IconButton>
      </StatusTools>
    </StatusBar>
  );
}

function App() {
  return (
    <Page>
      <GlobalStyle />
      <AppHeader />
      <HomeRibbon />
      <Workspace>
        <PathFinder />
        <Viewport />
        <PartFamily />
        <SideStrip />
        <PromptBar>
          <PromptLabel><Icon name="prompt" size={14} />提示条</PromptLabel>
          单击"绘制"命令并在平面上创建封闭草图（按 F3 锁定至平面），然后单击"实体"命令或选择封闭"区域"以创建特征。
        </PromptBar>
      </Workspace>
      <Status />
    </Page>
  );
}

export default App;
